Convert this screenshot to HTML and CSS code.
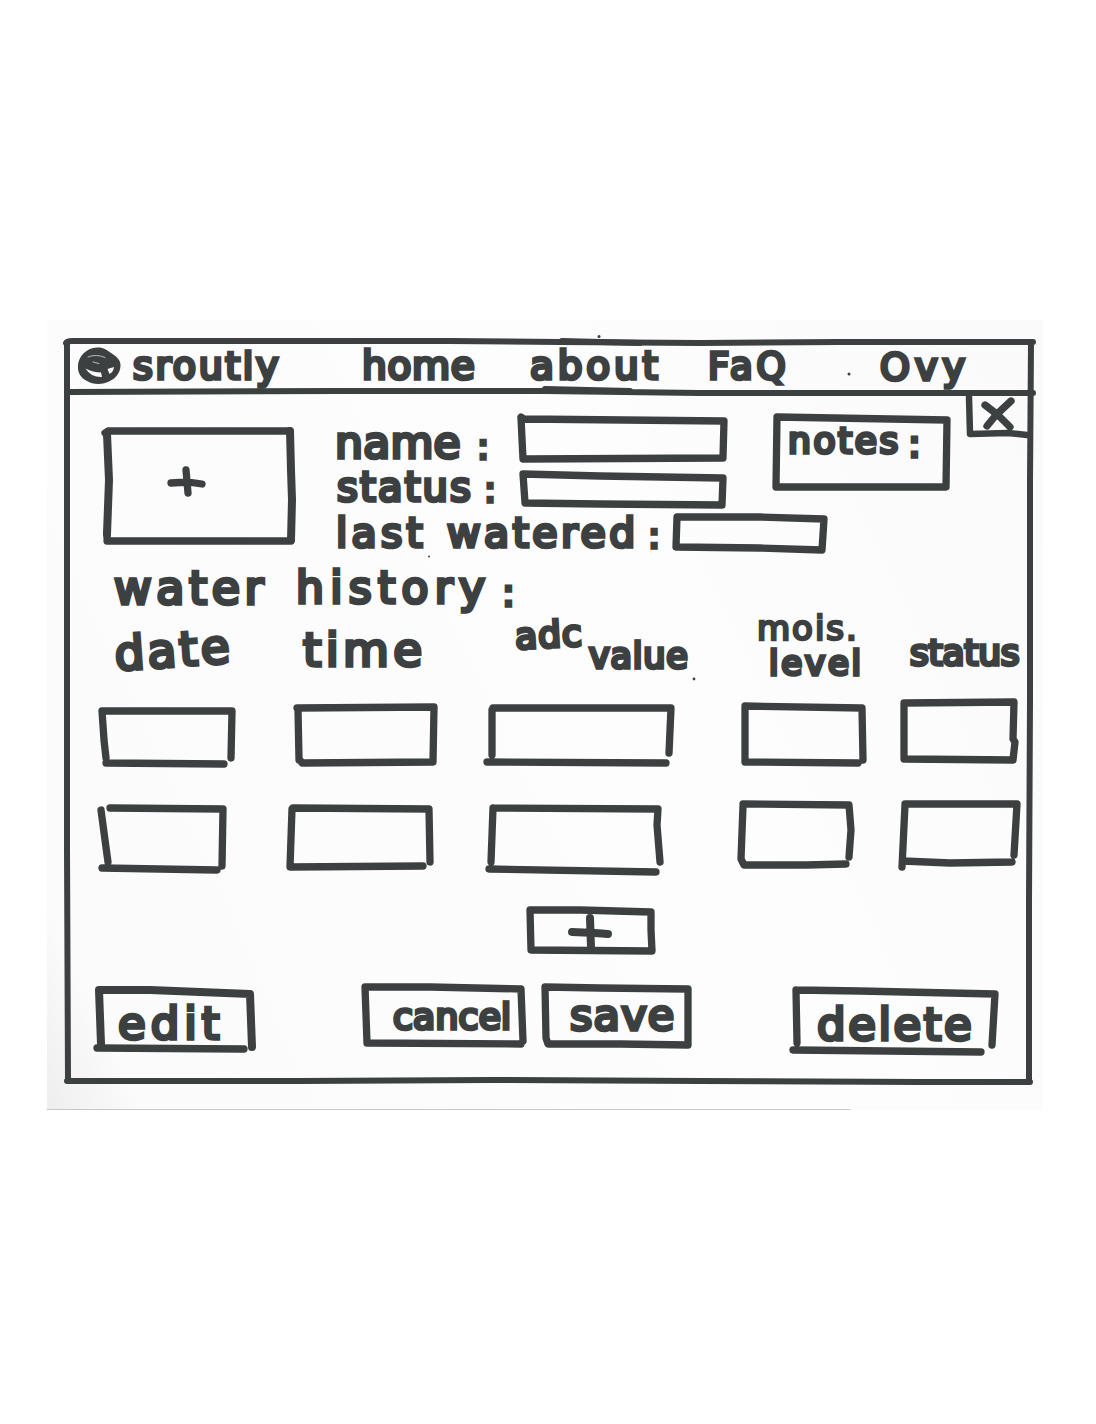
FILE: index.html
```html
<!DOCTYPE html>
<html lang="en">
<head>
<meta charset="utf-8">
<title>Sroutly</title>
<link rel="stylesheet" href="styles.css">
</head>
<body>
<main class="paper">
  <svg class="frame-lines" width="996" height="790" viewBox="47 320 996 790">
    <path class="thin" d="M66 343Q67 341 72 341L340 341L450 341L560 342L700 343L840 342L1033 342M67 343L67 600L67 850L68 1081M1031 343L1030 480L1030 700L1029 900L1029 1082M67 1081L300 1081L490 1080L700 1081L920 1082L1030 1082"/>
    <path class="thin" d="M68 392L340 391L545 391L700 393L1033 393M545 389L630 391M562 341L640 343"/>
    <path class="edge" d="M47 1109.500H850"/>
    <circle cx="849" cy="374" r="1.500"/><circle cx="599" cy="336.500" r="1.500"/><circle cx="694" cy="679" r="1.400"/><circle cx="429" cy="556.500" r="1"/>
  </svg>
  <div class="frame">
    <nav class="nav">
      <svg class="logo" width="43" height="38" viewBox="78 347 43 38">
        <path class="disc" d="M97 347.500C103 347 107 350 111 353C116 356 121 360 120.500 366C120 373 116 378 110 381C103 385 93 385 87 381C81 378 77.500 373 78 366C78 357 86 348 97 347.500Z"/>
        <path class="shine" d="M85.500 368.500Q93 372.500 101 372.500L102 377Q91 377.500 85.500 368.500ZM107.500 369L114 367Q113.500 372 109.500 374Z"/>
        <path class="scratch" d="M88 357Q96 353.500 105 357.500M93 362L99 363.500"/>
      </svg>
      <span class="ink t-brand">sroutly</span>
      <a class="ink t-home">home</a>
      <a class="ink t-about">about</a>
      <a class="ink t-faq">FaQ</a>
      <a class="ink t-user">Ovy</a>
    </nav>

    <section class="details">
      <svg class="photo" width="194" height="120" viewBox="102 426 194 120">
        <path d="M105 433L108 431L290 431M107 541L291 541M107 538L107 532"/>
        <path class="bold" d="M107 434L109 480L107 534M290 431L291 470L292 500L291 540"/>
        <path d="M171 483L188 482L202 484M186 470L188 493"/>
      </svg>
      <div class="label name-label"><span class="ink t-name">name</span><span class="ink t-colon">:</span></div>
      <svg class="name-box" width="213" height="50" viewBox="516 414 213 50">
        <path d="M521 417L524 419L724 421L723 457M521 418L523 459L723 458"/>
      </svg>
      <div class="label status-label"><span class="ink t-status">status</span><span class="ink t-colon">:</span></div>
      <svg class="status-box" width="213" height="42" viewBox="516 469 213 42">
        <path d="M523 474L600 476L723 478L722 505L600 504L525 503Z"/>
      </svg>
      <div class="label watered"><span class="ink t-last">last</span><span class="ink t-watered">watered</span><span class="ink t-colon big">:</span>
        <svg width="157" height="44" viewBox="672 511 157 44">
          <path d="M677 517L760 517L824 519L822 550L760 548L676 547Z"/>
        </svg>
      </div>
      <div class="notes">
        <svg width="180" height="81" viewBox="772 412 180 81">
          <path d="M777 417L947 420L946 487L776 487Z"/>
        </svg>
        <div class="notes-text"><span class="ink t-notes">notes</span><span class="ink t-notes-colon">:</span></div>
      </div>
      <svg class="close" width="66" height="49" viewBox="965 392 66 49">
        <path class="mid" d="M969 397L970 434L1008 433L1027 435"/>
        <path d="M985 405L998 415L1010 427M1011 401L996 415L987 426"/>
      </svg>
    </section>

    <h1 class="title"><span class="ink t-water">water</span><span class="ink t-history">history</span><span class="ink t-title-colon">:</span></h1>

    <section class="history">
      <div class="row head">
        <span class="ink t-date">date</span>
        <span class="ink t-time">time</span>
        <div class="adc"><span class="ink t-adc">adc</span><span class="ink t-value">value</span></div>
        <div class="level"><span class="ink t-mois">mois.</span><span class="ink t-level">level</span></div>
        <span class="ink t-state">status</span>
      </div>
      <div class="row first">
        <svg width="140" height="74" viewBox="98 698 140 74"><path d="M102 711L232 711L231 758M102 711L104 740L106 758M106 763L224 764"/></svg>
        <svg width="150" height="74" viewBox="288 698 150 74"><path d="M297 708L434 707L433 762L302 763L300 760M298 709L299 760"/></svg>
        <svg width="192" height="74" viewBox="484 698 192 74"><path d="M493 708L671 708L669 753M492 710L492 755M487 762L666 763"/></svg>
        <svg width="130" height="74" viewBox="737 698 130 74"><path d="M745 706L862 708L863 760M745 707L745 762L858 763"/></svg>
        <svg width="125" height="74" viewBox="897 698 125 74"><path d="M904 703L1014 702L1013 739L1015 742L1013 760L904 759Z"/></svg>
      </div>
      <div class="row second">
        <svg width="140" height="80" viewBox="98 798 140 80"><path d="M110 808L223 809L222 866M101 810L105 840L108 862M102 868L217 870"/></svg>
        <svg width="150" height="80" viewBox="288 798 150 80"><path d="M293 808L429 809L430 862M292 809L290 867L423 866"/></svg>
        <svg width="192" height="80" viewBox="484 798 192 80"><path d="M493 808L658 809L657 825L660 862M493 808L491 862M489 869L656 872"/></svg>
        <svg width="130" height="80" viewBox="737 798 130 80"><path d="M743 804L849 805L851 830L849 857M743 806L741 859L744 865L806 865L846 864"/></svg>
        <svg width="125" height="80" viewBox="897 798 125 80"><path d="M905 804L1017 804L1014 855M905 805L902 867M903 861L950 863L1012 862"/></svg>
      </div>
    </section>

    <svg class="add" width="130" height="54" viewBox="525 904 130 54">
      <path d="M530 910L580 910L651 912L651 930L652 951L531 950Z"/>
      <path class="bold" d="M572 932L595 933L608 934M590 918L591 948"/>
    </svg>

    <footer class="actions">
      <button class="btn edit">
        <svg width="167" height="72" viewBox="92 984 167 72"><path class="bold" d="M99 990L150 990L250 994L252 1047M99 990L101 1044"/><path d="M97 1048L244 1049"/></svg>
        <span class="ink t-edit">edit</span>
      </button>
      <button class="btn cancel">
        <svg width="169" height="72" viewBox="359 979 169 72"><path d="M365 987L430 987L521 989L523 1041M365 987L367 1043L521 1044"/></svg>
        <span class="ink t-cancel">cancel</span>
      </button>
      <button class="btn save">
        <svg width="153" height="72" viewBox="541 979 153 72"><path d="M545 987L600 988L688 989L688 1045L620 1044L548 1044L546 1038Z"/></svg>
        <span class="ink t-save">save</span>
      </button>
      <button class="btn delete">
        <svg width="209" height="72" viewBox="791 984 209 72"><path d="M796 990L860 991L995 994L992 1045M796 990L797 1043M793 1050L981 1052"/></svg>
        <span class="ink t-delete">delete</span>
      </button>
    </footer>
  </div>
</main>
</body>
</html>
```
FILE: styles.css
```css
* { box-sizing: border-box; }
body { margin: 0; background: #fff; color: #3d4041; font-family: "DejaVu Sans", sans-serif; }

.paper {
  display: grid;
  width: 996px;
  height: 790px;
  margin: 320px 0 0 47px;
  background: linear-gradient(65deg, #eeeeef 0, #fbfbfc 7%, #fdfdfd 60%, #fafafb 100%);
}
.paper > * { grid-area: 1 / 1; }
.frame { display: flex; flex-direction: column; padding: 18px 12px 0 18px; }

svg { display: block; overflow: visible; fill: #3d4041; }
path { fill: none; stroke: #3d4041; stroke-width: 7.3; stroke-linecap: round; stroke-linejoin: round; }
.thin { stroke-width: 6; }
.mid { stroke-width: 6.5; }
.bold { stroke-width: 8; }
.edge { stroke: #c9c9cb; stroke-width: 1; }
.disc { fill: #3d4041; stroke: none; }
.shine { fill: #fafafa; stroke: none; }
.scratch { stroke: #b9babb; stroke-width: 1; }

.ink {
  display: block;
  line-height: 1;
  white-space: nowrap;
  font-weight: 400;
  -webkit-text-stroke: 3.6px #3d4041;
  stroke-linejoin: round;
}

.nav {
  display: grid;
  grid-template-columns: 54px 229px 168px 178px 171px 1fr;
  align-items: start;
  height: 54px;
  padding-left: 13px;
}
.logo { margin-top: 9px; }
.t-brand { font-size: 38px; letter-spacing: 2.6px; margin: 9px 0 0 1px; }
.t-home { font-size: 39px; letter-spacing: .7px; margin: 8px 0 0 1px; }
.t-about { font-size: 39px; letter-spacing: 3.8px; margin: 8px 0 0 1px; }
.t-faq { font-size: 37px; letter-spacing: 4px; margin: 10px 0 0 1px; }
.t-user { font-size: 38px; letter-spacing: 5px; margin: 10px 0 0 2px; }

.details {
  display: grid;
  grid-template-columns: 233px 181px 256px 193px 66px;
  grid-template-rows: 74px 43px 47px;
  height: 164px;
  padding-left: 37px;
}
.photo { grid-area: 1 / 1 / 4 / 2; margin-top: 34px; }
.name-label { grid-area: 1 / 2; padding-top: 29px; }
.name-box { grid-area: 1 / 3; margin-top: 22px; }
.status-label { grid-area: 2 / 2; padding-top: 5px; }
.status-box { grid-area: 2 / 3; margin-top: 3px; }
.label { display: flex; align-items: flex-start; }
.t-name { font-size: 44px; width: 142px; letter-spacing: .3px; }
.t-status { font-size: 40px; line-height: .84; width: 149px; letter-spacing: 2.2px; padding-left: 2px; }
.t-colon { font-size: 36px; line-height: .84; margin-top: 11px; }
.status-label .t-colon { margin-top: 4px; }
.watered { grid-area: 3 / 2 / 4 / 5; padding-top: 2px; }
.watered .ink { margin-top: 5px; line-height: .86; }
.t-last { font-size: 41px; width: 112px; letter-spacing: 4.2px; padding-left: 1px; }
.t-watered { font-size: 41px; width: 201px; letter-spacing: 3.5px; }
.watered .t-colon { width: 24px; margin-top: 10px; }
.notes { grid-area: 1 / 4 / 3 / 5; display: grid; margin-top: 20px; height: 81px; }
.notes > * { grid-area: 1 / 1; }
.notes-text { display: flex; align-items: flex-start; padding: 11px 0 0 16px; }
.t-notes { font-size: 36px; letter-spacing: 2.6px; width: 120px; }
.t-notes-colon { font-size: 38px; margin-top: 2px; }
.close { grid-area: 1 / 5; }

.title { display: flex; align-items: flex-start; height: 54px; margin: 0; padding: 9px 0 0 49px; }
.t-water { font-size: 46px; width: 182px; letter-spacing: 4.6px; }
.t-history { font-size: 44px; width: 206px; letter-spacing: 6.3px; margin-top: 1px; }
.t-title-colon { font-size: 38px; margin-top: 9px; }

.history { padding-left: 33px; }
.row { display: grid; grid-template-columns: 190px 196px 253px 160px 133px; align-items: start; }
.head { height: 88px; }
.first { height: 100px; }
.second { height: 106px; }
.t-date { font-size: 47px; letter-spacing: 3px; margin: 17px 0 0 17px; transform: rotate(-4deg); transform-origin: 50px 30px; }
.t-time { font-size: 47px; letter-spacing: 4.3px; margin: 16px 0 0 15px; }
.adc { display: flex; align-items: flex-start; padding-left: 31px; }
.t-adc { font-size: 36px; letter-spacing: 1px; width: 74px; margin-top: 7px; transform: rotate(-3deg); }
.t-value { font-size: 35px; letter-spacing: .8px; margin-top: 29px; }
.level { padding-left: 20px; }
.t-mois { font-size: 34px; letter-spacing: 2px; margin-top: 1px; -webkit-text-stroke-width: 2.6px; }
.t-level { font-size: 34px; letter-spacing: 2.8px; margin: 1px 0 0 12px; }
.t-state { font-size: 36px; letter-spacing: -.2px; margin: 25px 0 0 13px; }

.add { margin-left: 460px; }

.actions { display: flex; align-items: flex-start; padding: 21px 0 0 27px; }
.btn { display: grid; justify-items: start; align-items: start; border: 0; padding: 0; background: none; color: inherit; font-family: inherit; }
.btn > * { grid-area: 1 / 1; }
.edit { margin-top: 5px; }
.cancel { margin-left: 100px; }
.save { margin-left: 13px; }
.delete { margin: 5px 0 0 97px; }
.t-edit { font-size: 45px; letter-spacing: 5px; margin: 17px 0 0 26px; }
.t-cancel { font-size: 36px; letter-spacing: .3px; margin: 20px 0 0 34px; }
.t-save { font-size: 43px; letter-spacing: 1.2px; margin: 15px 0 0 29px; }
.t-delete { font-size: 45px; letter-spacing: 2.6px; margin: 18px 0 0 26px; }
```
